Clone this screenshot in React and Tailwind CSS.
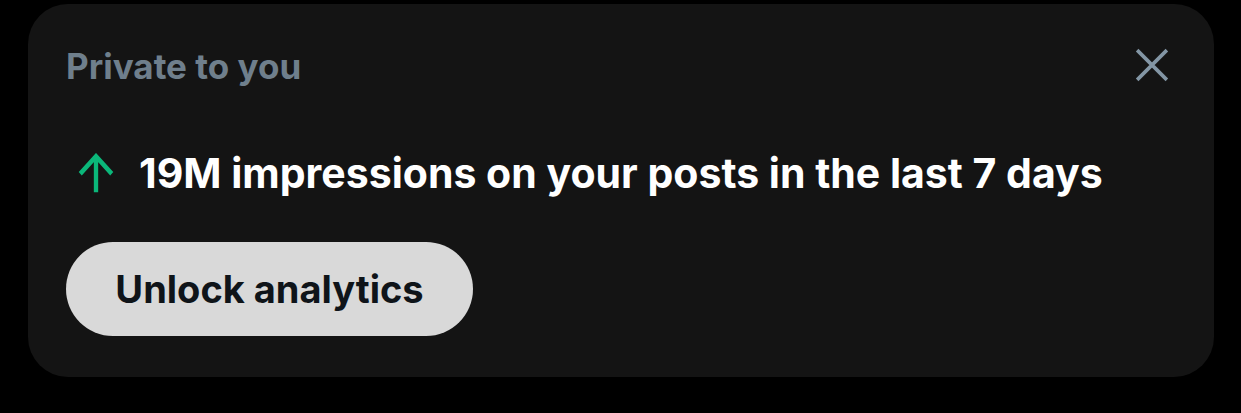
export default function App() {
  return (
    <div className="w-[1241px] h-[413px] bg-black pt-[4px] pl-[28px]" style={{ fontFamily: 'Inter, "Noto Sans", sans-serif' }}>
      <div className="w-[1186px] h-[373px] bg-[#141414] rounded-[40px] relative px-[38px] pt-[40px]">
        <div className="text-[35px] leading-[44px] font-bold text-[#6f7f8c]">Private to you</div>
        <button className="absolute right-[45px] top-[44px] w-[34px] h-[34px] text-[#8396a5]">
          <svg viewBox="0 0 24 24" width="34" height="34" fill="none" stroke="currentColor" strokeWidth="2.5">
            <path d="M1.5 1.5L22.5 22.5M22.5 1.5L1.5 22.5" />
          </svg>
        </button>
        <div className="flex items-center mt-[60px] h-[50px]">
          <svg viewBox="0 0 24 24" width="36" height="40" fill="none" stroke="#0bb77a" strokeWidth="2.9" className="ml-[12px]" preserveAspectRatio="none">
            <path d="M12 23.5V2.5M1.5 12.5L12 2L22.5 12.5" />
          </svg>
          <span className="ml-[25px] text-[41px] leading-[50px] font-bold text-white">19M impressions on your posts in the last 7 days</span>
        </div>
        <button className="mt-[44px] w-[407px] h-[94px] rounded-full bg-[#d9d9d9] text-[#0f1419] text-[38px] font-bold">
          Unlock analytics
        </button>
      </div>
    </div>
  );
}
